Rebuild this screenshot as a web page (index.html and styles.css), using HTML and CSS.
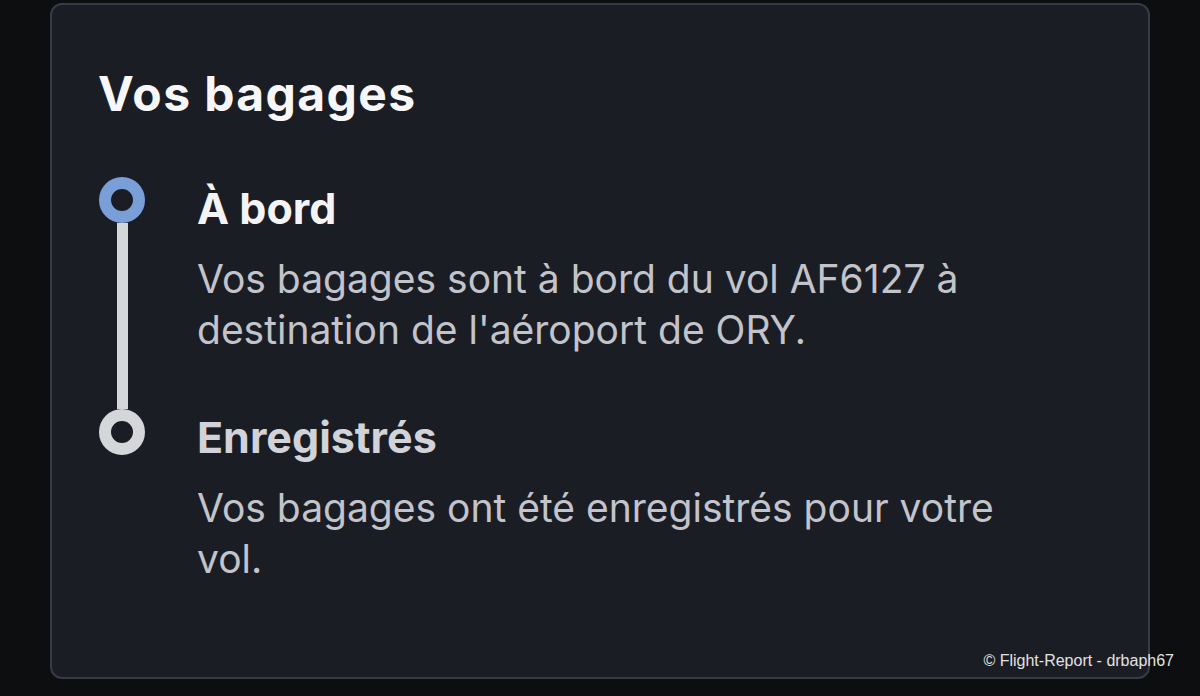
FILE: index.html
```html
<!DOCTYPE html>
<html lang="fr">
<head>
<meta charset="utf-8">
<title>Vos bagages</title>
<link rel="stylesheet" href="styles.css">
</head>
<body>
<main class="card">
  <h1 class="title">Vos bagages</h1>
  <ol class="timeline">
    <li class="step step-active">
      <div class="marker">
        <span class="dot"></span>
        <span class="line"></span>
      </div>
      <div class="content">
        <h2 class="step-title">À bord</h2>
        <p class="step-text">Vos bagages sont à bord du vol AF6127 à destination de l'aéroport de ORY.</p>
      </div>
    </li>
    <li class="step step-done">
      <div class="marker">
        <span class="dot"></span>
      </div>
      <div class="content">
        <h2 class="step-title">Enregistrés</h2>
        <p class="step-text">Vos bagages ont été enregistrés pour votre vol.</p>
      </div>
    </li>
  </ol>
</main>
<div class="watermark">© Flight-Report - drbaph67</div>
</body>
</html>
```

FILE: styles.css
```css
html, body {
  margin: 0;
  padding: 0;
}
body {
  width: 1200px;
  height: 696px;
  background: #0d0e10;
  font-family: Inter, "Open Sans", sans-serif;
  position: relative;
  overflow: hidden;
  padding-top: 3px;
  box-sizing: border-box;
}
.card {
  margin-left: 50px;
  width: 1100px;
  height: 676px;
  box-sizing: border-box;
  border: 2px solid #383b47;
  border-radius: 12px;
  background: #1b1d25;
  padding: 61px 0 0 46px;
}
.title {
  margin: 0;
  font-size: 48px;
  line-height: 56px;
  font-weight: 700;
  letter-spacing: 1.4px;
  color: #f7f7f9;
}
.timeline {
  list-style: none;
  margin: 55px 0 0 0;
  padding: 0;
}
.step {
  display: grid;
  grid-template-columns: 48px 820px;
  column-gap: 51px;
}
.marker {
  display: flex;
  flex-direction: column;
  align-items: center;
}
.dot {
  width: 46px;
  height: 46px;
  box-sizing: border-box;
  border-radius: 50%;
  border: 12px solid #d5d6da;
  flex: none;
}
.step-active .dot {
  border-color: #7a9ed8;
}
.line {
  flex: 1;
  width: 11px;
  background: #d5d6da;
}
.content {
  padding-top: 7px;
}
.step-active .content {
  padding-bottom: 54px;
}
.step-done .content {
  padding-top: 4px;
}
.step-title {
  margin: 0;
  font-size: 43px;
  line-height: 48px;
  font-weight: 700;
  color: #f4f4f6;
}
.step-done .step-title {
  color: #d2d3d8;
}
.step-text {
  margin: 21px 0 0 0;
  font-size: 39px;
  line-height: 51px;
  font-weight: 400;
  color: #c3c4cb;
}
.watermark {
  position: absolute;
  right: 26px;
  top: 652px;
  font-family: "Liberation Sans", Arial, sans-serif;
  font-size: 16px;
  color: #e2e2e2;
}
```
